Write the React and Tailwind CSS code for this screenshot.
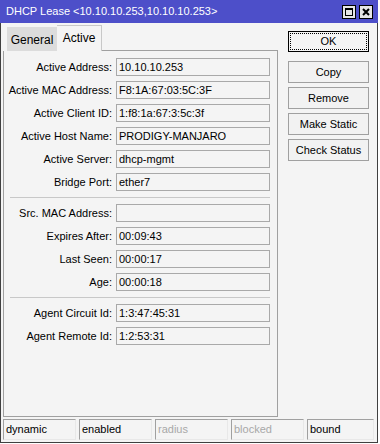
const font = { fontFamily: "'Liberation Sans', Arial, sans-serif" };

const groups = [
  [
    ['Active Address:', '10.10.10.253'],
    ['Active MAC Address:', 'F8:1A:67:03:5C:3F'],
    ['Active Client ID:', '1:f8:1a:67:3:5c:3f'],
    ['Active Host Name:', 'PRODIGY-MANJARO'],
    ['Active Server:', 'dhcp-mgmt'],
    ['Bridge Port:', 'ether7'],
  ],
  [
    ['Src. MAC Address:', ''],
    ['Expires After:', '00:09:43'],
    ['Last Seen:', '00:00:17'],
    ['Age:', '00:00:18'],
  ],
  [
    ['Agent Circuit Id:', '1:3:47:45:31'],
    ['Agent Remote Id:', '1:2:53:31'],
  ],
];

const status = [
  ['dynamic', true],
  ['enabled', true],
  ['radius', false],
  ['blocked', false],
  ['bound', true],
];

function Field({ label, value }) {
  return (
    <div className="flex items-center h-[18px]">
      <div className="w-[108px] text-right whitespace-nowrap leading-none">{label}</div>
      <div className="ml-[4px] w-[154px] h-[18px] border border-[#a9a9a9] bg-[#f4f4f4] pl-[2px] flex items-center leading-none">
        {value}
      </div>
    </div>
  );
}

function Separator() {
  return (
    <div className="h-[3px] flex items-center">
      <div className="ml-[6px] w-[260px] h-px bg-[#c8c8c8]" />
    </div>
  );
}

function Button({ children }) {
  return (
    <div className="h-[22px] border border-[#a0a0a0] bg-[#f2f2f2] flex items-center justify-center leading-none">
      {children}
    </div>
  );
}

export default function App() {
  return (
    <div className="w-[380px] h-[444px] bg-white text-[11px] text-black" style={font}>
      <div className="w-[378px] h-[443px] border-r border-b border-l border-[#404040] bg-[#f4f4f4] flex flex-col">
        {/* Title bar */}
        <div className="h-[23px] -mx-px bg-[#4d4fc9] flex items-center pl-[6px] pr-[5px]">
          <span className="text-white text-[11px] leading-none">DHCP Lease &lt;10.10.10.253,10.10.10.253&gt;</span>
          <div className="ml-auto flex gap-[3px]">
            <div className="w-[14px] h-[14px] bg-[#e6e6e6] border border-black flex items-center justify-center">
              <div className="w-[8px] h-[8px] border border-black border-t-2" />
            </div>
            <div className="w-[14px] h-[14px] bg-[#e6e6e6] border border-black flex items-center justify-center">
              <svg width="8" height="8" viewBox="0 0 8 8">
                <path d="M1 1 L7 7 M7 1 L1 7" stroke="black" strokeWidth="2" />
              </svg>
            </div>
          </div>
        </div>

        <div className="flex">
          {/* Left: tabs + panel */}
          <div className="ml-[2px] mt-[2px]">
            <div className="flex items-end h-[26px]">
              <div className="ml-[4px] w-[50px] h-[24px] bg-[#dcdcdc] flex items-center justify-center text-[12px] leading-none pt-[1px]">
                General
              </div>
              <div className="w-[45px] h-[26px] border-t border-r border-[#c8c8c8] flex items-center justify-center text-[12px] leading-none pb-[2px]">
                Active
              </div>
              <div className="w-[176px] border-b border-[#a0a0a0]" />
            </div>
            <div className="w-[275px] h-[366px] border-l border-r border-b border-[#a0a0a0] pt-[7px] flex flex-col gap-[5px]">
              {groups.map((g, gi) => (
                <div key={gi} className="contents">
                  {gi > 0 && <Separator />}
                  {g.map(([l, v]) => (
                    <Field key={l} label={l} value={v} />
                  ))}
                </div>
              ))}
            </div>
          </div>

          {/* Right: buttons */}
          <div className="ml-[10px] mt-[8px] w-[81px] flex flex-col">
            <div className="h-[21px] border border-black p-px">
              <div className="h-full border border-dotted border-black flex items-center justify-center leading-none">OK</div>
            </div>
            <div className="mt-[9px] flex flex-col gap-[4px]">
              <Button>Copy</Button>
              <Button>Remove</Button>
              <Button>Make Static</Button>
              <Button>Check Status</Button>
            </div>
          </div>
        </div>

        {/* Status bar */}
        <div className="mt-[2px] ml-[2px] flex gap-[3px]">
          {status.map(([t, on], i) => (
            <div
              key={t}
              className={
                'h-[21px] border-t border-l border-[#a0a0a0] border-r border-b border-r-[#e8e8e8] border-b-[#e8e8e8] pl-[2px] flex items-center leading-none ' +
                (i === 4 ? 'w-[67px] ' : 'w-[73px] ') +
                (on ? 'text-black' : 'text-[#a8a8a8]')
              }
            >
              {t}
            </div>
          ))}
        </div>
      </div>
    </div>
  );
}
